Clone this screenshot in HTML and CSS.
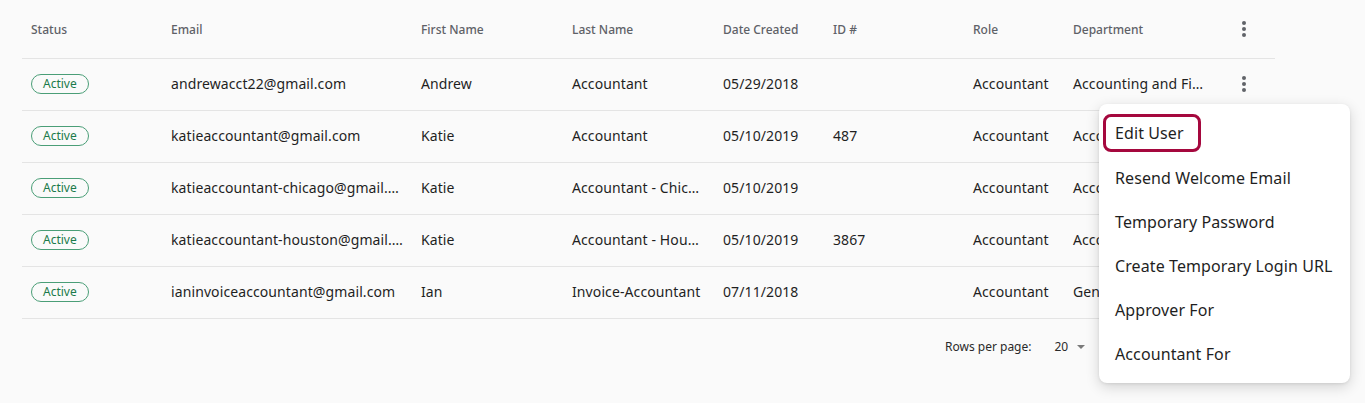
FILE: index.html
```html
<!DOCTYPE html>
<html lang="en">
<head>
    <meta charset="UTF-8">
    <meta name="viewport" content="width=device-width, initial-scale=1.0">
    <title>Users</title>
    <link rel="stylesheet" href="styles.css">
</head>
<body>
    <div class="page">
        <table class="users">
            <colgroup>
                <col class="c-status">
                <col class="c-email">
                <col class="c-first">
                <col class="c-last">
                <col class="c-date">
                <col class="c-id">
                <col class="c-role">
                <col class="c-dept">
                <col class="c-more">
            </colgroup>
            <thead>
                <tr>
                    <th>Status</th>
                    <th>Email</th>
                    <th>First Name</th>
                    <th>Last Name</th>
                    <th>Date Created</th>
                    <th>ID #</th>
                    <th>Role</th>
                    <th>Department</th>
                    <th class="more"><span class="kebab"><i></i><i></i><i></i></span></th>
                </tr>
            </thead>
            <tbody>
                <tr>
                    <td><span class="badge">Active</span></td>
                    <td>andrewacct22@gmail.com</td>
                    <td>Andrew</td>
                    <td>Accountant</td>
                    <td>05/29/2018</td>
                    <td></td>
                    <td>Accountant</td>
                    <td>Accounting and Finance</td>
                    <td class="more"><span class="kebab"><i></i><i></i><i></i></span></td>
                </tr>
                <tr>
                    <td><span class="badge">Active</span></td>
                    <td>katieaccountant@gmail.com</td>
                    <td>Katie</td>
                    <td>Accountant</td>
                    <td>05/10/2019</td>
                    <td>487</td>
                    <td>Accountant</td>
                    <td>Accounting and Finance</td>
                    <td class="more"></td>
                </tr>
                <tr>
                    <td><span class="badge">Active</span></td>
                    <td>katieaccountant-chicago@gmail.com</td>
                    <td>Katie</td>
                    <td>Accountant - Chicago</td>
                    <td>05/10/2019</td>
                    <td></td>
                    <td>Accountant</td>
                    <td>Accounting and Finance</td>
                    <td class="more"></td>
                </tr>
                <tr>
                    <td><span class="badge">Active</span></td>
                    <td>katieaccountant-houston@gmail.com</td>
                    <td>Katie</td>
                    <td>Accountant - Houston</td>
                    <td>05/10/2019</td>
                    <td>3867</td>
                    <td>Accountant</td>
                    <td>Accounting and Finance</td>
                    <td class="more"></td>
                </tr>
                <tr>
                    <td><span class="badge">Active</span></td>
                    <td>ianinvoiceaccountant@gmail.com</td>
                    <td>Ian</td>
                    <td>Invoice-Accountant</td>
                    <td>07/11/2018</td>
                    <td></td>
                    <td>Accountant</td>
                    <td>General</td>
                    <td class="more"></td>
                </tr>
            </tbody>
        </table>

        <div class="pager">
            <span class="pager-label">Rows per page:</span>
            <span class="pager-select">20 <span class="caret"></span></span>
            <span class="pager-range">1-5 of 5</span>
        </div>

        <ul class="menu">
            <li class="first"><span class="focused">Edit User</span></li>
            <li>Resend Welcome Email</li>
            <li>Temporary Password</li>
            <li>Create Temporary Login URL</li>
            <li>Approver For</li>
            <li>Accountant For</li>
        </ul>
    </div>
</body>
</html>
```

FILE: styles.css
```css
* {
    box-sizing: border-box;
    margin: 0;
    padding: 0;
}
body {
    background-color: #fafafa;
    font-family: "Noto Sans", "Open Sans", sans-serif;
    color: #1f1f1f;
}
.page {
    position: relative;
    padding: 0 22px;
    height: 403px;
}
.users {
    width: 1253px;
    table-layout: fixed;
    border-collapse: collapse;
}
.c-status { width: 140px; }
.c-email { width: 250px; }
.c-first { width: 151px; }
.c-last { width: 151px; }
.c-date { width: 110px; }
.c-id { width: 140px; }
.c-role { width: 100px; }
.c-dept { width: 150px; }
.c-more { width: 61px; }
th, td {
    text-align: left;
    padding: 0 9px;
    white-space: nowrap;
    overflow: hidden;
    text-overflow: ellipsis;
    border-bottom: 1px solid #e4e4e4;
}
th {
    height: 58px;
    padding-top: 2px;
    font-size: 12px;
    font-weight: 500;
    color: #5e6167;
}
td {
    height: 52px;
    padding-bottom: 2px;
    font-size: 14px;
    letter-spacing: 0.1px;
}
th.more {
    padding-top: 0;
}
.more {
    padding: 0 0 0 28px;
}
.kebab {
    display: flex;
    flex-direction: column;
    gap: 2px;
    width: 4px;
}
.kebab i {
    display: block;
    width: 4px;
    height: 4px;
    border-radius: 50%;
    background-color: #606368;
}
.badge {
    display: inline-block;
    height: 20px;
    line-height: 18px;
    padding: 0 11px;
    border: 1px solid #4a9e77;
    border-radius: 10px;
    font-size: 12px;
    letter-spacing: 0;
    color: #1b7a4b;
}
.pager {
    display: flex;
    align-items: center;
    height: 56px;
    padding-left: 923px;
    font-size: 12px;
    color: #2a2a2a;
}
.pager-select {
    display: flex;
    align-items: center;
    margin-left: 23px;
    gap: 9px;
}
.caret {
    width: 0;
    height: 0;
    border-left: 4.5px solid transparent;
    border-right: 4.5px solid transparent;
    border-top: 4.5px solid #7a7a7a;
}
.pager-range {
    margin-left: 40px;
}
.menu {
    position: absolute;
    left: 1099px;
    top: 104px;
    width: 251px;
    padding: 8px 0 7px;
    list-style: none;
    background-color: #fff;
    border-radius: 8px;
    box-shadow: 0 4px 14px rgba(0, 0, 0, 0.16), 0 1px 3px rgba(0, 0, 0, 0.08);
}
.menu li {
    display: flex;
    align-items: center;
    height: 44px;
    padding-left: 16px;
    font-size: 16px;
    letter-spacing: 0.1px;
    color: #1f1f1f;
}
.menu .first {
    padding-bottom: 3px;
}
.focused {
    display: block;
    margin-left: -12px;
    height: 38px;
    line-height: 32px;
    padding: 0 14px 0 9px;
    border: 3px solid #a5083e;
    border-radius: 8px;
}
```
